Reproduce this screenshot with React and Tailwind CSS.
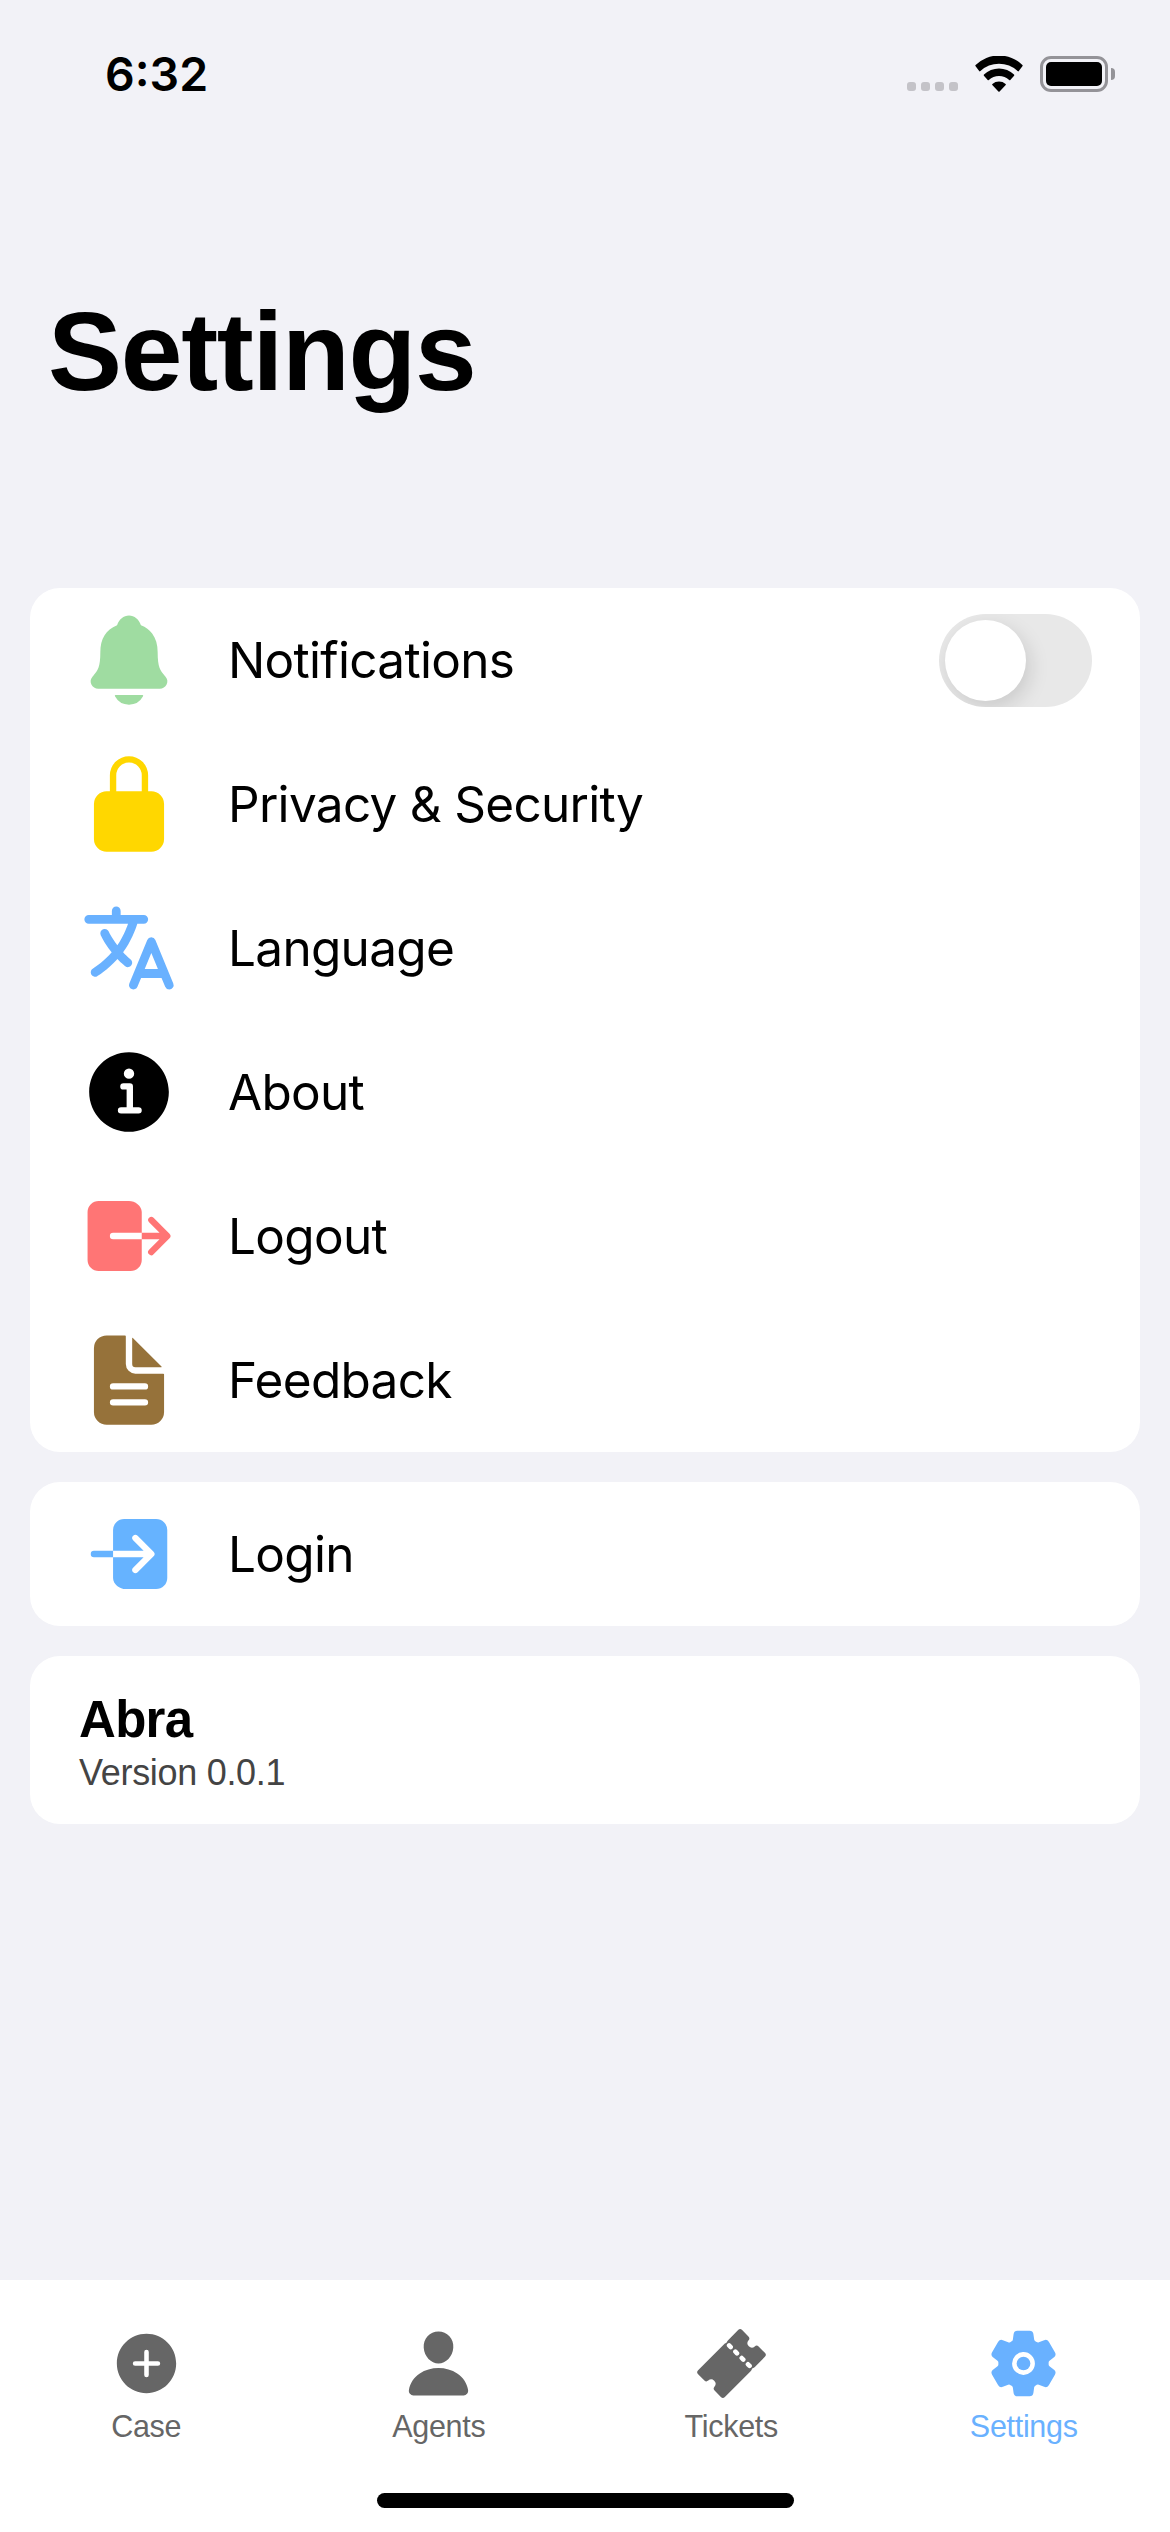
import React from "react";
import {
  IoNotifications,
  IoLockClosed,
  IoLanguage,
  IoInformationCircle,
  IoLogOut,
  IoLogIn,
  IoDocumentText,
  IoAddCircle,
  IoPerson,
  IoTicket,
  IoSettings,
} from "react-icons/io5";

const rows = [
  { label: "Notifications", Icon: IoNotifications, color: "text-[#9fdca1]", toggle: true },
  { label: "Privacy & Security", Icon: IoLockClosed, color: "text-[#ffd700]" },
  { label: "Language", Icon: IoLanguage, color: "text-[#69b1ff]" },
  { label: "About", Icon: IoInformationCircle, color: "text-black" },
  { label: "Logout", Icon: IoLogOut, color: "text-[#ff7575]" },
  { label: "Feedback", Icon: IoDocumentText, color: "text-[#96723a]" },
];

const tabs = [
  { label: "Case", Icon: IoAddCircle, color: "text-[#666666]" },
  { label: "Agents", Icon: IoPerson, color: "text-[#666666]" },
  { label: "Tickets", Icon: IoTicket, color: "text-[#666666]" },
  { label: "Settings", Icon: IoSettings, color: "text-[#69b1ff]" },
];

function StatusBar() {
  return (
    <header className="flex h-[148px] items-start justify-between pl-[105px] pr-[55px] pt-[44px]">
      <span className="font-['Inter',sans-serif] text-[46.5px] font-semibold leading-[60px] text-black">6:32</span>
      <div className="flex h-[60px] items-center">
        <div className="mt-[25px] flex gap-[5px]">
          {[0, 1, 2, 3].map((i) => (
            <span key={i} className="size-[9px] rounded-[3px] bg-[#c4c3c8]" />
          ))}
        </div>
        <svg className="ml-[17px] h-[36px] w-[48px]" viewBox="0 0 48 36">
          <path d="M0.6 10.2Q0 9.6 0.6 9A33.5 33.5 0 0 1 47.4 9Q48 9.6 47.4 10.2L43.8 15.1Q43.3 15.7 42.600 15.100A27 27 0 0 0 5.400 15.100Q4.700 15.700 4.200 15.100Z" />
          <path d="M8.900 19.700Q8.400 19.100 9 18.500A21.800 21.800 0 0 1 39 18.500Q39.600 19.100 39.100 19.700L35.300 24Q34.800 24.600 34.200 24A15 15 0 0 0 13.800 24Q13.200 24.600 12.700 24Z" />
          <path d="M17.300 28.900Q16.800 28.400 17.400 27.900A10 10 0 0 1 30.600 27.900Q31.200 28.400 30.700 28.900L24.600 35.500Q24 36 23.400 35.500Z" />
        </svg>
        <div className="ml-[17px] h-[36px] w-[68px] rounded-[11px] border-[3px] border-[#949398] p-[3px]">
          <div className="h-full w-full rounded-[5px] bg-black" />
        </div>
        <span className="ml-[3px] h-[12px] w-[4px] rounded-r-full bg-[#949398]" />
      </div>
    </header>
  );
}

function Toggle() {
  return (
    <button className="flex h-[93px] w-[153px] items-center overflow-hidden rounded-full bg-[#e8e8e8] px-[6px]">
      <span className="size-[81px] rounded-full bg-white shadow-[4px_7px_20px_rgba(0,0,0,0.13)]" />
    </button>
  );
}

function Row({ label, Icon, color, toggle }) {
  return (
    <div className="flex h-[144px] items-center pl-[48px] pr-[48px]">
      <Icon className={`size-[102px] ${color}`} />
      <span className="ml-[48px] flex-1 font-['Inter',sans-serif] text-[49.5px] tracking-[-0.7px] text-black">{label}</span>
      {toggle && <Toggle />}
    </div>
  );
}

export default function App() {
  return (
    <div className="flex h-[2532px] w-[1170px] flex-col overflow-hidden bg-[#f2f2f7] font-['Liberation_Sans',Arial,sans-serif]">
      <StatusBar />
      <h1 className="ml-[48px] mt-[145px] h-[120px] text-[111px] font-bold leading-[118px] tracking-[-1.3px] text-black">Settings</h1>
      <main className="mt-[175px] flex flex-col gap-[30px] px-[30px]">
        <section className="rounded-[30px] bg-white">
          {rows.map((row) => (
            <Row key={row.label} {...row} />
          ))}
        </section>
        <section className="rounded-[30px] bg-white">
          <Row label="Login" Icon={IoLogIn} color="text-[#66b3ff]" />
        </section>
        <section className="h-[168px] rounded-[30px] bg-white pl-[49px] pt-[34px]">
          <h2 className="text-[51px] font-bold leading-[60px] tracking-[-0.7px] text-black">Abra</h2>
          <p className="text-[36px] leading-[46px] tracking-[-0.3px] text-[#444444]">Version 0.0.1</p>
        </section>
      </main>
      <nav className="mt-auto flex h-[252px] flex-col items-center bg-white">
        <div className="grid w-full grid-cols-4 pt-[47px]">
          {tabs.map(({ label, Icon, color }) => (
            <div key={label} className={`flex flex-col items-center ${color}`}>
              <Icon className="size-[73px]" />
              <span className="mt-[8px] text-[30.5px] leading-[36px] tracking-[-0.3px]">{label}</span>
            </div>
          ))}
        </div>
        <div className="mb-[24px] mt-auto h-[15px] w-[417px] rounded-full bg-black" />
      </nav>
    </div>
  );
}
